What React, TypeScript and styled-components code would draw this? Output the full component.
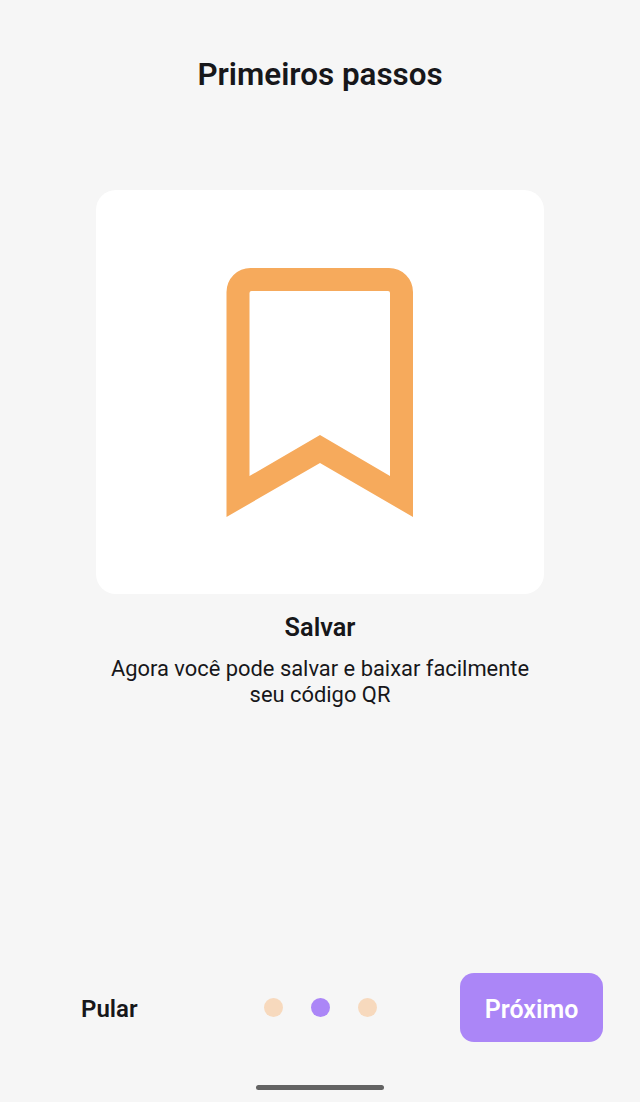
import React from "react";
import styled, { createGlobalStyle } from "styled-components";

const Global = createGlobalStyle`
  html, body { margin: 0; padding: 0; background: #f6f6f6; }
  * { box-sizing: border-box; }
`;

const Screen = styled.main`
  width: 640px;
  height: 1102px;
  background: #f6f6f6;
  font-family: Roboto, "Liberation Sans", sans-serif;
  color: #17171a;
  display: flex;
  flex-direction: column;
  align-items: center;
  overflow: hidden;
`;

const Title = styled.h1`
  margin: 55px 0 0;
  font-size: 31.4px;
  line-height: 40px;
  font-weight: 600;
  text-align: center;
`;

const Card = styled.section`
  margin-top: 95px;
  width: 448px;
  height: 404px;
  background: #fff;
  border-radius: 20px;
  display: flex;
  justify-content: center;
  padding-top: 78px;
`;

const Heading = styled.h2`
  margin: 19px 0 0;
  font-size: 25.3px;
  line-height: 30px;
  font-weight: 600;
  text-align: center;
`;

const Body = styled.p`
  margin: 13px 0 0;
  width: 460px;
  font-size: 21.9px;
  line-height: 26px;
  font-weight: 400;
  text-align: center;
`;

const Footer = styled.footer`
  margin-top: auto;
  width: 100%;
  height: 69px;
  padding: 0 37px 0 81px;
  display: flex;
  align-items: center;
  justify-content: space-between;
`;

const Skip = styled.span`
  font-size: 24px;
  font-weight: 600;
  width: 56px;
  margin-top: 2px;
`;

const Dots = styled.div`
  display: flex;
  gap: 28px;
  margin-left: 44px;
`;

const Dot = styled.span<{ $active?: boolean }>`
  width: 19px;
  height: 19px;
  border-radius: 50%;
  background: ${(p) => (p.$active ? "#ab86f7" : "#f7d9bd")};
`;

const NextButton = styled.button`
  width: 143px;
  height: 69px;
  border: 0;
  border-radius: 14px;
  background: #ab86f7;
  color: #fff;
  font-family: inherit;
  font-size: 25px;
  font-weight: 600;
  padding: 3px 0 0;
`;

const HomeBar = styled.div`
  margin: 43px 0 12px;
  width: 128px;
  height: 5px;
  border-radius: 3px;
  background: #636363;
`;

export default function App() {
  return (
    <Screen>
      <Global />
      <Title>Primeiros passos</Title>
      <Card>
        <svg width="188" height="249" viewBox="0 0 188 249" aria-hidden="true">
          <path
            fill="#f6aa5c"
            fillRule="evenodd"
            d="M0.5 249V24A24 24 0 0 1 24.5 0H163A24 24 0 0 1 187 24V249L94 195L0.5 249ZM23.5 208L94 167L164 208V25A2 2 0 0 0 162 23H25.5A2 2 0 0 0 23.5 25V208Z"
          />
        </svg>
      </Card>
      <Heading>Salvar</Heading>
      <Body>
        Agora você pode salvar e baixar facilmente
        <br />
        seu código QR
      </Body>
      <Footer>
        <Skip>Pular</Skip>
        <Dots>
          <Dot />
          <Dot $active />
          <Dot />
        </Dots>
        <NextButton>Próximo</NextButton>
      </Footer>
      <HomeBar />
    </Screen>
  );
}
